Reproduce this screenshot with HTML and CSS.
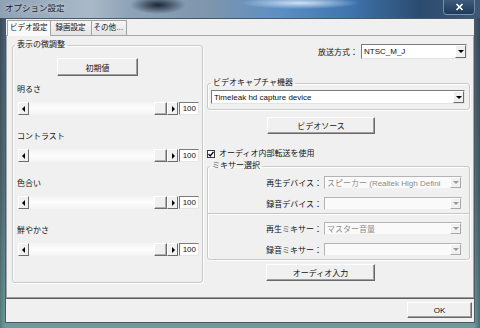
FILE: index.html
```html
<!DOCTYPE html>
<html lang="ja">
<head>
  <meta charset="UTF-8" />
  <title>オプション設定</title>
  <link rel="stylesheet" href="styles.css">
</head>
<body>
  <div class="window">
    <div class="titlebar">
      <span class="title">オプション設定</span>
      <span class="close">
        <svg width="9" height="8" viewBox="0 0 9 8"><path d="M1.5 1l6 6M7.5 1l-6 6" stroke="#fff" stroke-width="1.7"/></svg>
      </span>
    </div>

    <div class="client">
      <div class="tabs">
        <span class="tab active">ビデオ設定</span>
        <span class="tab rec">録画設定</span>
        <span class="tab">その他…</span>
      </div>

      <div class="panel">
        <fieldset class="group adjust">
          <legend>表示の微調整</legend>
          <button class="btn reset">初期値</button>

          <div class="setting">
            <div class="label">明るさ</div>
            <div class="slider"><span class="sb prev"></span><span class="track"></span><span class="thumb"></span><span class="sb next"></span><span class="value">100</span></div>
          </div>
          <div class="setting">
            <div class="label">コントラスト</div>
            <div class="slider"><span class="sb prev"></span><span class="track"></span><span class="thumb"></span><span class="sb next"></span><span class="value">100</span></div>
          </div>
          <div class="setting">
            <div class="label">色合い</div>
            <div class="slider"><span class="sb prev"></span><span class="track"></span><span class="thumb"></span><span class="sb next"></span><span class="value">100</span></div>
          </div>
          <div class="setting">
            <div class="label">鮮やかさ</div>
            <div class="slider"><span class="sb prev"></span><span class="track"></span><span class="thumb"></span><span class="sb next"></span><span class="value">100</span></div>
          </div>
        </fieldset>

        <div class="side">
          <div class="standard">
            <span>放送方式：</span>
            <div class="combo"><span class="val">NTSC_M_J</span><span class="drop"></span></div>
          </div>

          <fieldset class="group capture">
            <legend>ビデオキャプチャ機器</legend>
            <div class="combo"><span class="val">Timeleak hd capture device</span><span class="drop"></span></div>
          </fieldset>

          <button class="btn source">ビデオソース</button>

          <div class="check">
            <span class="box"><svg width="6" height="6" viewBox="0 0 6 6"><path d="M0.5 3l1.8 2L5.5 0.8" fill="none" stroke="#000" stroke-width="1.3"/></svg></span>
            <span>オーディオ内部転送を使用</span>
          </div>

          <fieldset class="group mixer">
            <legend>ミキサー選択</legend>
            <div class="mixrow">
              <span>再生デバイス：</span>
              <div class="combo disabled"><span class="val">スピーカー (Realtek High Defini</span><span class="drop"></span></div>
            </div>
            <div class="mixrow">
              <span>録音デバイス：</span>
              <div class="combo disabled"><span class="val"></span><span class="drop"></span></div>
            </div>
            <div class="sep"></div>
            <div class="mixrow">
              <span>再生ミキサー：</span>
              <div class="combo disabled"><span class="val">マスター音量</span><span class="drop"></span></div>
            </div>
            <div class="mixrow">
              <span>録音ミキサー：</span>
              <div class="combo disabled"><span class="val"></span><span class="drop"></span></div>
            </div>
          </fieldset>

          <button class="btn audio">オーディオ入力</button>
        </div>
      </div>

      <div class="footer">
        <button class="btn ok">OK</button>
      </div>
    </div>
  </div>
</body>
</html>
```

FILE: styles.css
```css
* {
  box-sizing: border-box;
}

body {
  margin: 0;
  width: 480px;
  height: 328px;
  overflow: hidden;
  font-family: "Liberation Sans", "Noto Sans CJK JP", sans-serif;
  font-size: 8px;
  color: #111;
}

.window {
  width: 480px;
  height: 328px;
  display: flex;
  flex-direction: column;
  background:
    linear-gradient(90deg, rgba(0, 0, 0, 0.2) 0, rgba(0, 0, 0, 0) 5px, rgba(0, 0, 0, 0) 474px, rgba(20, 40, 70, 0.4) 100%),
    linear-gradient(180deg, #46586a 0%, #56707a 55%, #6b9b9b 100%);
}

/* title bar */
.titlebar {
  height: 18px;
  flex: none;
  display: flex;
  justify-content: space-between;
  padding: 0 5px;
  background:
    radial-gradient(ellipse 28px 9px at 158px 5px, rgba(15, 25, 40, 0.9), rgba(15, 25, 40, 0)),
    radial-gradient(ellipse 60px 6px at 300px 3px, rgba(220, 235, 250, 0.9), rgba(220, 235, 250, 0)),
    linear-gradient(90deg, #8fa2b5 0, #a9b9c8 90px, #8ea3b8 130px, #7d95ad 210px, #5c8fc4 280px, #3f74ad 350px, #2b4b70 420px, #3e5874 100%);
}

.title {
  line-height: 17px;
  font-size: 8.5px;
  color: #1b1b1b;
  text-shadow: 0 0 4px rgba(255, 255, 255, 0.8);
}

.close {
  width: 32px;
  height: 15px;
  display: flex;
  align-items: center;
  justify-content: center;
  border: 1px solid rgba(200, 215, 230, 0.45);
  border-top: 0;
  border-radius: 0 0 4px 4px;
  background: linear-gradient(#3c5a7c, #1e3a5a);
}

/* client area */
.client {
  flex: 1;
  margin: 0 5px 5px;
  border: 1px solid #4b5964;
  background: #f0f0f0;
  display: flex;
  flex-direction: column;
}

.tabs {
  height: 16px;
  flex: none;
  display: flex;
  align-items: flex-end;
  padding: 1px 0 0 1px;
}

.tab {
  height: 15px;
  padding: 0 2px;
  line-height: 13px;
  font-size: 7.5px;
  border: 1px solid #a3a3a3;
  border-bottom: 0;
  margin-right: -1px;
  background: linear-gradient(#f6f6f6, #e4e4e4);
}

.tab.rec {
  padding: 0 5px;
}

.tab.active {
  height: 16px;
  margin-bottom: -1px;
  background: #fafafa;
  position: relative;
  z-index: 1;
}

.panel {
  flex: none;
  height: 263px;
  display: flex;
  align-items: flex-start;
  gap: 4px;
  padding: 4px 3px 0 5px;
  border: 1px solid #a4a8ae;
  border-bottom: 1px solid #9a9a9a;
}

.footer {
  flex: 1;
  display: flex;
  justify-content: flex-end;
  align-items: flex-start;
  padding: 3px 2px 0 0;
  border-top: 1px solid #5e5e5e;
}

/* group boxes */
.group {
  margin: 0;
  min-width: 0;
  border: 1px solid #c9c9c9;
  border-radius: 3px;
  box-shadow: inset 1px 1px 0 #fff, 1px 1px 0 #fff;
}

.group legend {
  padding: 0 2px;
  line-height: 10px;
}

/* buttons */
.btn {
  display: block;
  flex: none;
  padding: 0;
  font: inherit;
  color: #111;
  background: #f0f0f0;
  border: 1px solid;
  border-color: #fff #696969 #696969 #fff;
  box-shadow: inset -1px -1px 0 #a0a0a0;
}

.reset {
  width: 81px;
  height: 18px;
  margin: 8px 0 0 42px;
}

.source {
  width: 108px;
  height: 17px;
  margin: 7px 0 0 60px;
}

.audio {
  width: 109px;
  height: 17px;
  margin: 4px 0 0 59px;
}

.ok {
  width: 65px;
  height: 16px;
}

/* left: fine adjustment */
.adjust {
  flex: none;
  width: 191px;
  height: 243px;
  padding: 0 2px;
}

.setting {
  margin: 9px 0 0 2px;
}

.setting + .setting {
  margin-top: 17px;
}

.label {
  line-height: 10px;
}

.slider {
  display: flex;
  width: 181px;
  height: 13px;
  margin: 7px 0 0 1px;
}

.slider > span {
  flex: none;
  display: block;
  height: 13px;
}

.sb,
.thumb {
  background: #f0f0f0;
  border: 1px solid;
  border-color: #fff #6d6d6d #6d6d6d #fff;
}

.sb {
  width: 11px;
  position: relative;
}

/* arrow glyph drawn inside the scroll button */
.sb::before {
  content: "";
  position: absolute;
  top: 3px;
  left: 3px;
  border: 3px solid transparent;
}

.sb.prev::before {
  border-left: 0;
  border-right-color: #000;
}

.sb.next::before {
  left: 4px;
  border-right: 0;
  border-left-color: #000;
}

.slider .track {
  width: 125px;
  background: linear-gradient(#f3f3f3, #fdfdfd 50%, #f3f3f3);
}

.slider .thumb {
  width: 13px;
  box-shadow: inset -1px -1px 0 #b0b0b0;
}

.slider .value {
  width: 20px;
  margin-left: 1px;
  padding-right: 2px;
  text-align: right;
  line-height: 11px;
  background: #fff;
  border: 1px solid;
  border-color: #7a7a7a #e6e6e6 #e6e6e6 #7a7a7a;
}

/* right column */
.side {
  flex: none;
  width: 263px;
  display: flex;
  flex-direction: column;
}

.standard {
  display: flex;
  justify-content: flex-end;
  align-items: center;
  gap: 3px;
  height: 15px;
  margin-top: 4px;
  padding-right: 3px;
}

.combo {
  display: flex;
  height: 15px;
  background: #fff;
  border: 1px solid;
  border-color: #7a7a7a #e3e3e3 #e3e3e3 #7a7a7a;
}

.combo .val {
  flex: 1;
  padding-left: 2px;
  white-space: nowrap;
  overflow: hidden;
  display: flex;
  align-items: center;
}

.combo .drop {
  width: 11px;
  flex: none;
  display: flex;
  align-items: center;
  justify-content: center;
  background: #f0f0f0;
  border: 1px solid;
  border-color: #fff #6d6d6d #6d6d6d #fff;
}

.combo .drop::before {
  content: "";
  border: 3px solid transparent;
  border-bottom: 0;
  border-top-color: #000;
}

.standard .combo {
  width: 106px;
}

.capture {
  margin-top: 19px;
  padding: 0 4px 5px 3px;
}

.capture .combo {
  height: 14px;
  margin-top: 2px;
}

.check {
  display: flex;
  align-items: center;
  gap: 4px;
  margin-top: 15px;
  line-height: 10px;
}

.check .box {
  width: 8px;
  height: 8px;
  display: flex;
  align-items: center;
  justify-content: center;
  background: #fff;
  border: 1px solid #3a3a3a;
}

.mixer {
  margin-top: 2px;
  padding: 0 7px 3px 2px;
}

.mixrow {
  display: flex;
  justify-content: flex-end;
  align-items: center;
  gap: 2px;
  margin-top: 5px;
}

.mixrow + .mixrow,
.sep + .mixrow {
  margin-top: 8px;
}

.mixrow .combo {
  width: 138px;
  height: 13px;
}

.combo.disabled {
  color: #8c8c8c;
  background: #fafafa;
  border-color: #b4b4b4 #f0f0f0 #f0f0f0 #b4b4b4;
}

.combo.disabled .drop {
  border-color: #fff #a8a8a8 #a8a8a8 #fff;
}

.combo.disabled .drop::before {
  border-top-color: #9a9a9a;
}

.sep {
  height: 1px;
  margin: 3px -7px 0 -2px;
  background: #c6c6c6;
  box-shadow: 0 1px 0 #fff;
}
```
